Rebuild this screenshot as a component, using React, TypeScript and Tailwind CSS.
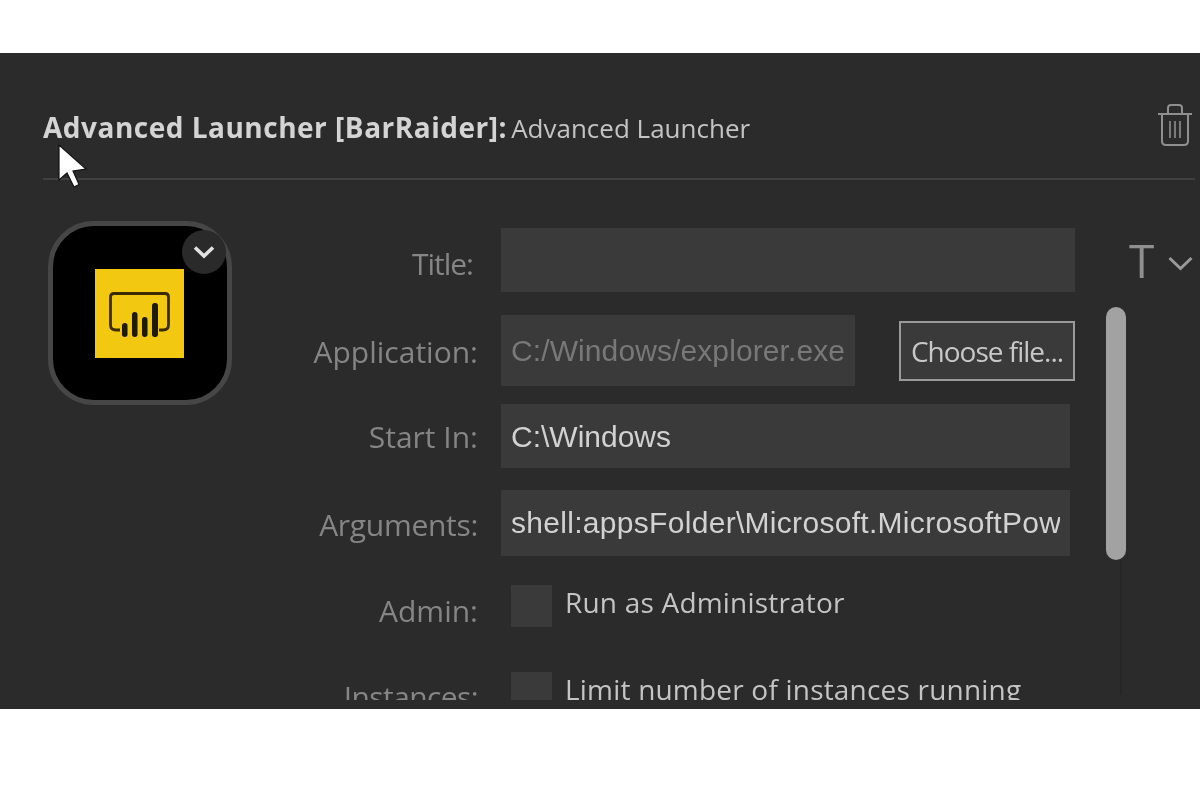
import React from "react";

const labelCls = "shrink-0 text-right text-[30px] leading-none text-[#858585] font-['Open_Sans',sans-serif]";
const inputCls = "flex items-center bg-[#3a3a3a] pl-[10px] text-[30px] font-['Liberation_Sans',sans-serif] whitespace-nowrap overflow-hidden";
const checkText = "ml-[13px] mt-[-1px] text-[28px] leading-[36px] tracking-[0.2px] text-[#c4c4c4] font-['Open_Sans',sans-serif] whitespace-nowrap";

const PowerBiLogo = () => (
  <svg className="block" width="89" height="89" viewBox="0 0 89 89">
    <rect width="89" height="89" fill="#f2c811" />
    <path d="M25 61 H21 Q15.5 61 15.5 56 V28 Q15.5 24.5 19 24.5 H70 Q73.5 24.5 73.5 28 V56 Q73.5 61 68 61 H64" fill="none" stroke="#3a2c00" strokeWidth="2.8" />
    <rect x="27" y="54" width="5.5" height="14" rx="2.7" fill="#1f1a00" />
    <rect x="37" y="43" width="5.5" height="25" rx="2.7" fill="#1f1a00" />
    <rect x="47" y="48" width="5.5" height="20" rx="2.7" fill="#1f1a00" />
    <rect x="57" y="34" width="6" height="34" rx="2.7" fill="#1f1a00" />
  </svg>
);

const TrashIcon = () => (
  <svg width="36" height="46" viewBox="0 0 36 46" fill="none" stroke="#8f8f8f" strokeWidth="2">
    <path d="M1 11 H35" />
    <path d="M11 11 V5 Q11 2 14 2 H22 Q25 2 25 5 V11" />
    <path d="M5 11 V38 Q5 42 9 42 H27 Q31 42 31 38 V11" />
    <path d="M13 18 V35 M18 18 V35 M23 18 V35" strokeWidth="1.6" />
  </svg>
);

export default function App() {
  return (
    <div className="h-[800px] w-[1200px] overflow-hidden bg-white pt-[53px]">
      <div className="relative h-[656px] overflow-hidden bg-[#2b2b2b] pl-[43px] pr-[5px] blur-[0.5px]">
        {/* header */}
        <div className="flex h-[127px] items-end justify-between border-b-2 border-[#404040] pb-[29px]">
          <div className="mb-[-1px] leading-[36px] text-[#c4c4c4] font-['Open_Sans',sans-serif]">
            <span className="text-[28px] font-bold tracking-[0.5px] text-[#d4d4d4]">Advanced Launcher [BarRaider]:</span>{" "}
            <span className="text-[26px]">Advanced Launcher</span>
          </div>
          <div className="mr-[2px]">
            <TrashIcon />
          </div>
        </div>

        <div className="flex">
          {/* action icon */}
          <div className="relative mt-[41px] ml-[5px] flex h-[184px] w-[184px] shrink-0 items-center justify-center rounded-[46px] border-[5px] border-[#464646] bg-black">
            <div className="-ml-[2px]">
              <PowerBiLogo />
            </div>
            <div className="absolute right-[1px] top-[4px] flex h-[44px] w-[44px] items-center justify-center rounded-full bg-[#2a2a2a]">
              <svg width="22" height="14" viewBox="0 0 22 14" fill="none">
                <path d="M2 2.5 L11 11 L20 2.5" stroke="#e2e2e2" strokeWidth="3.6" />
              </svg>
            </div>
          </div>

          {/* form */}
          <div className="ml-[48px] mt-[48px] flex h-[472px] w-[795px] shrink-0 flex-col overflow-hidden">
            <div className="flex h-[64px] shrink-0 items-center">
              <div className={labelCls + " w-[193px] pt-[8px] tracking-[-1px]"}>Title:</div>
              <div className={inputCls + " ml-[28px] h-full w-[575px]"} />
            </div>
            <div className="mt-[23px] flex h-[71px] shrink-0 items-center">
              <div className={labelCls + " w-[198px] pt-[2px]"}>Application:</div>
              <div className={inputCls + " ml-[23px] h-full w-[354px] tracking-[0.1px] text-[#787878]"}>C:/Windows/explorer.exe</div>
              <button className="ml-[44px] h-[60px] w-[176px] border-2 border-[#9a9a9a] bg-[#3a3a3a] text-[28px] tracking-[-1px] text-[#c8c8c8] font-['Open_Sans',sans-serif] whitespace-nowrap">
                Choose file...
              </button>
            </div>
            <div className="mt-[18px] flex h-[64px] shrink-0 items-center">
              <div className={labelCls + " w-[198px] pt-[2px]"}>Start In:</div>
              <div className={inputCls + " ml-[23px] h-full w-[569px] text-[#d2d2d2]"}>C:\Windows</div>
            </div>
            <div className="mt-[22px] flex h-[66px] shrink-0 items-center">
              <div className={labelCls + " w-[198px] pt-[3px] tracking-[-0.3px]"}>Arguments:</div>
              <div className={inputCls + " ml-[23px] h-full w-[569px] pb-[2px] pr-[10px] tracking-[0.3px] text-[#d2d2d2]"}>
                <span className="block w-full overflow-hidden">shell:appsFolder\Microsoft.MicrosoftPowerBIDesktop</span>
              </div>
            </div>
            <div className="mt-[29px] flex h-[42px] shrink-0 items-start">
              <div className={labelCls + " w-[198px] pt-[11px]"}>Admin:</div>
              <div className="ml-[33px] h-[42px] w-[41px] shrink-0 bg-[#3a3a3a]" />
              <div className={checkText}>Run as Administrator</div>
            </div>
            <div className="mt-[45px] flex h-[42px] shrink-0 items-start">
              <div className={labelCls + " w-[198px] pt-[10px] tracking-[-0.6px]"}>Instances:</div>
              <div className="ml-[33px] h-[42px] w-[41px] shrink-0 bg-[#3a3a3a]" />
              <div className={checkText}>Limit number of instances running</div>
            </div>
          </div>

          {/* scrollbar + text toggle */}
          <div className="ml-[31px] mt-[127px] w-[20px] shrink-0">
            <div className="h-[253px] w-[20px] rounded-full bg-[#a2a2a2]" />
            <div className="ml-[14px] h-[135px] w-[2px] bg-[#262626]" />
          </div>
          <div className="ml-[3px] mt-[60px] flex h-[40px] items-center">
            <span className="text-[46px] font-medium leading-none text-[#8f8f8f] font-['Open_Sans',sans-serif]">T</span>
            <svg className="ml-[14px] mt-[6px]" width="25" height="15" viewBox="0 0 25 15" fill="none">
              <path d="M1.5 2 L12.5 12.5 L23.5 2" stroke="#9a9a9a" strokeWidth="3" />
            </svg>
          </div>
        </div>

        {/* mouse cursor from the capture */}
        <svg className="absolute left-[57px] top-[90px]" width="32" height="46" viewBox="0 0 32 46">
          <path d="M2 2 L2 37 L10 30 L17 44 L22 41.5 L16 28 L29 26 Z" fill="#fff" stroke="#111" strokeWidth="1.2" />
        </svg>
      </div>
    </div>
  );
}
